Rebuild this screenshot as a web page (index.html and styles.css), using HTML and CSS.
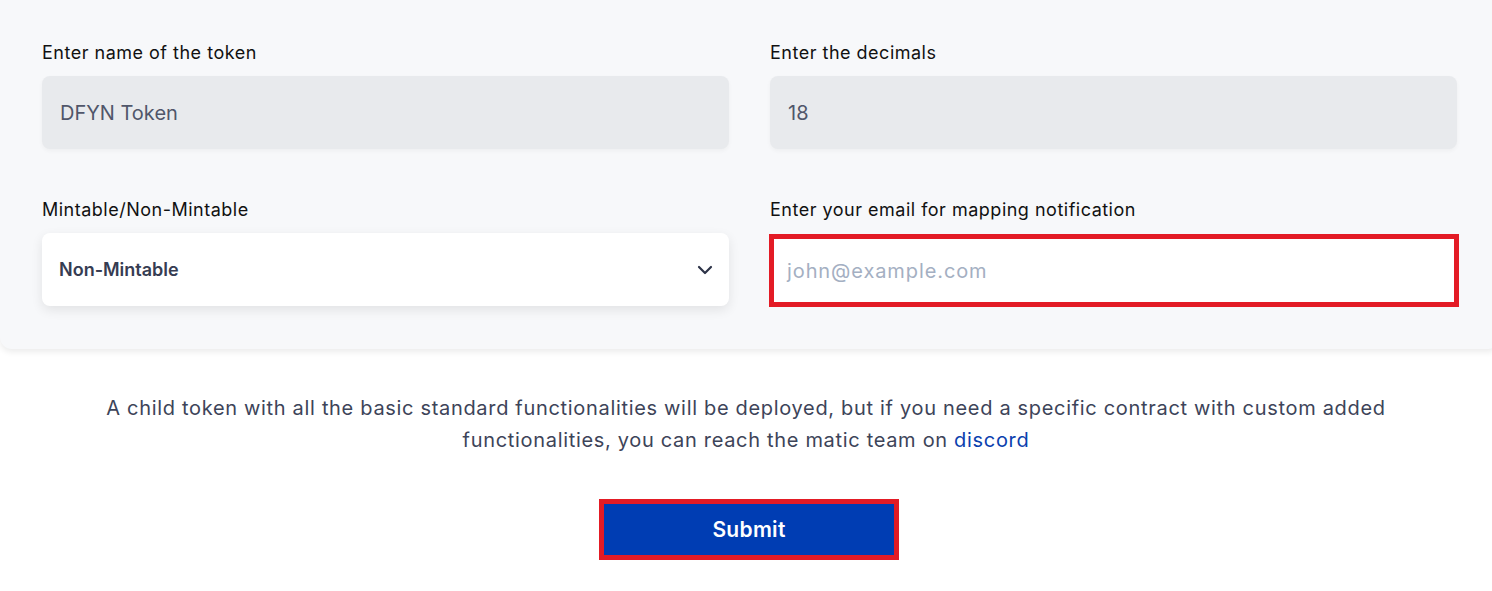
FILE: index.html
```html
<!DOCTYPE html>
<html>
<head>
<meta charset="utf-8">
<link rel="stylesheet" href="styles.css">
</head>
<body>
<div class="card">
  <div class="grid">
    <div class="field">
      <label class="label">Enter name of the token</label>
      <div class="input disabled">DFYN Token</div>
    </div>
    <div class="field">
      <label class="label">Enter the decimals</label>
      <div class="input disabled">18</div>
    </div>
    <div class="field">
      <label class="label">Mintable/Non-Mintable</label>
      <div class="select">
        <span>Non-Mintable</span>
        <svg class="chev" width="16" height="10" viewBox="0 0 16 10"><path d="M2 2l6 6 6-6" fill="none" stroke="#2d3348" stroke-width="2.2" stroke-linecap="round" stroke-linejoin="round"/></svg>
      </div>
    </div>
    <div class="field">
      <label class="label">Enter your email for mapping notification</label>
      <div class="input email">john@example.com</div>
    </div>
  </div>
</div>
<p class="note">A child token with all the basic standard functionalities will be deployed, but if you need a specific contract with custom added functionalities, you can reach the matic team on <a href="#">discord</a></p>
<div class="actions">
  <button class="submit">Submit</button>
</div>
</body>
</html>
```
FILE: styles.css
```css
html, body { margin: 0; padding: 0; background: #ffffff; }
body { font-family: Inter, "Noto Sans", sans-serif; overflow: hidden; width: 1492px; height: 591px; }
.card {
  width: 1416px;
  background: #f7f8fa;
  border-radius: 0 0 12px 12px;
  padding: 41px 42px 42px 42px;
  box-shadow: 0 3px 6px rgba(0,0,0,0.08);
}
.grid {
  display: grid;
  grid-template-columns: 687px 687px;
  column-gap: 41px;
  row-gap: 49px;
}
.field { display: flex; flex-direction: column; }
.label { font-size: 18px; color: #111; line-height: 24px; margin-bottom: 11px; letter-spacing: 0.5px; }
.input {
  height: 73px; box-sizing: border-box; border-radius: 8px;
  display: flex; align-items: center; padding-left: 18px;
  font-size: 20px;
}
.disabled { background: #e8eaed; color: #50566a; box-shadow: 0 2px 4px rgba(0,0,0,0.04); }
.email {
  background: #fff; border: 5px solid #e31b25; border-radius: 0; color: #a4afc2;
  padding-left: 13px; width: 690px; height: 73px; margin: 1px 0 0 -1px;
  letter-spacing: 0.9px;
}
.select {
  height: 73px; box-sizing: border-box; border-radius: 8px; background: #fff;
  display: flex; align-items: center; justify-content: space-between;
  padding: 0 16px 0 17px;
  font-size: 18px; font-weight: 600; color: #363c52;
  box-shadow: 0 4px 12px rgba(0,0,0,0.09);
}
.note {
  margin: 43px auto 0; width: 1320px; text-align: center;
  font-size: 20px; line-height: 32px; color: #3d4459; letter-spacing: 0.68px;
}
.note a { color: #0b3fae; text-decoration: none; }
.actions { display: flex; justify-content: center; margin-top: 43px; }
.submit {
  width: 300px; height: 61px; box-sizing: border-box;
  border: 5px solid #e31b25; background: #003db3; color: #fff;
  font-family: Inter, "Noto Sans", sans-serif; font-weight: 600; font-size: 21px;
  letter-spacing: 0.3px;
  margin-left: 6px;
}
```
